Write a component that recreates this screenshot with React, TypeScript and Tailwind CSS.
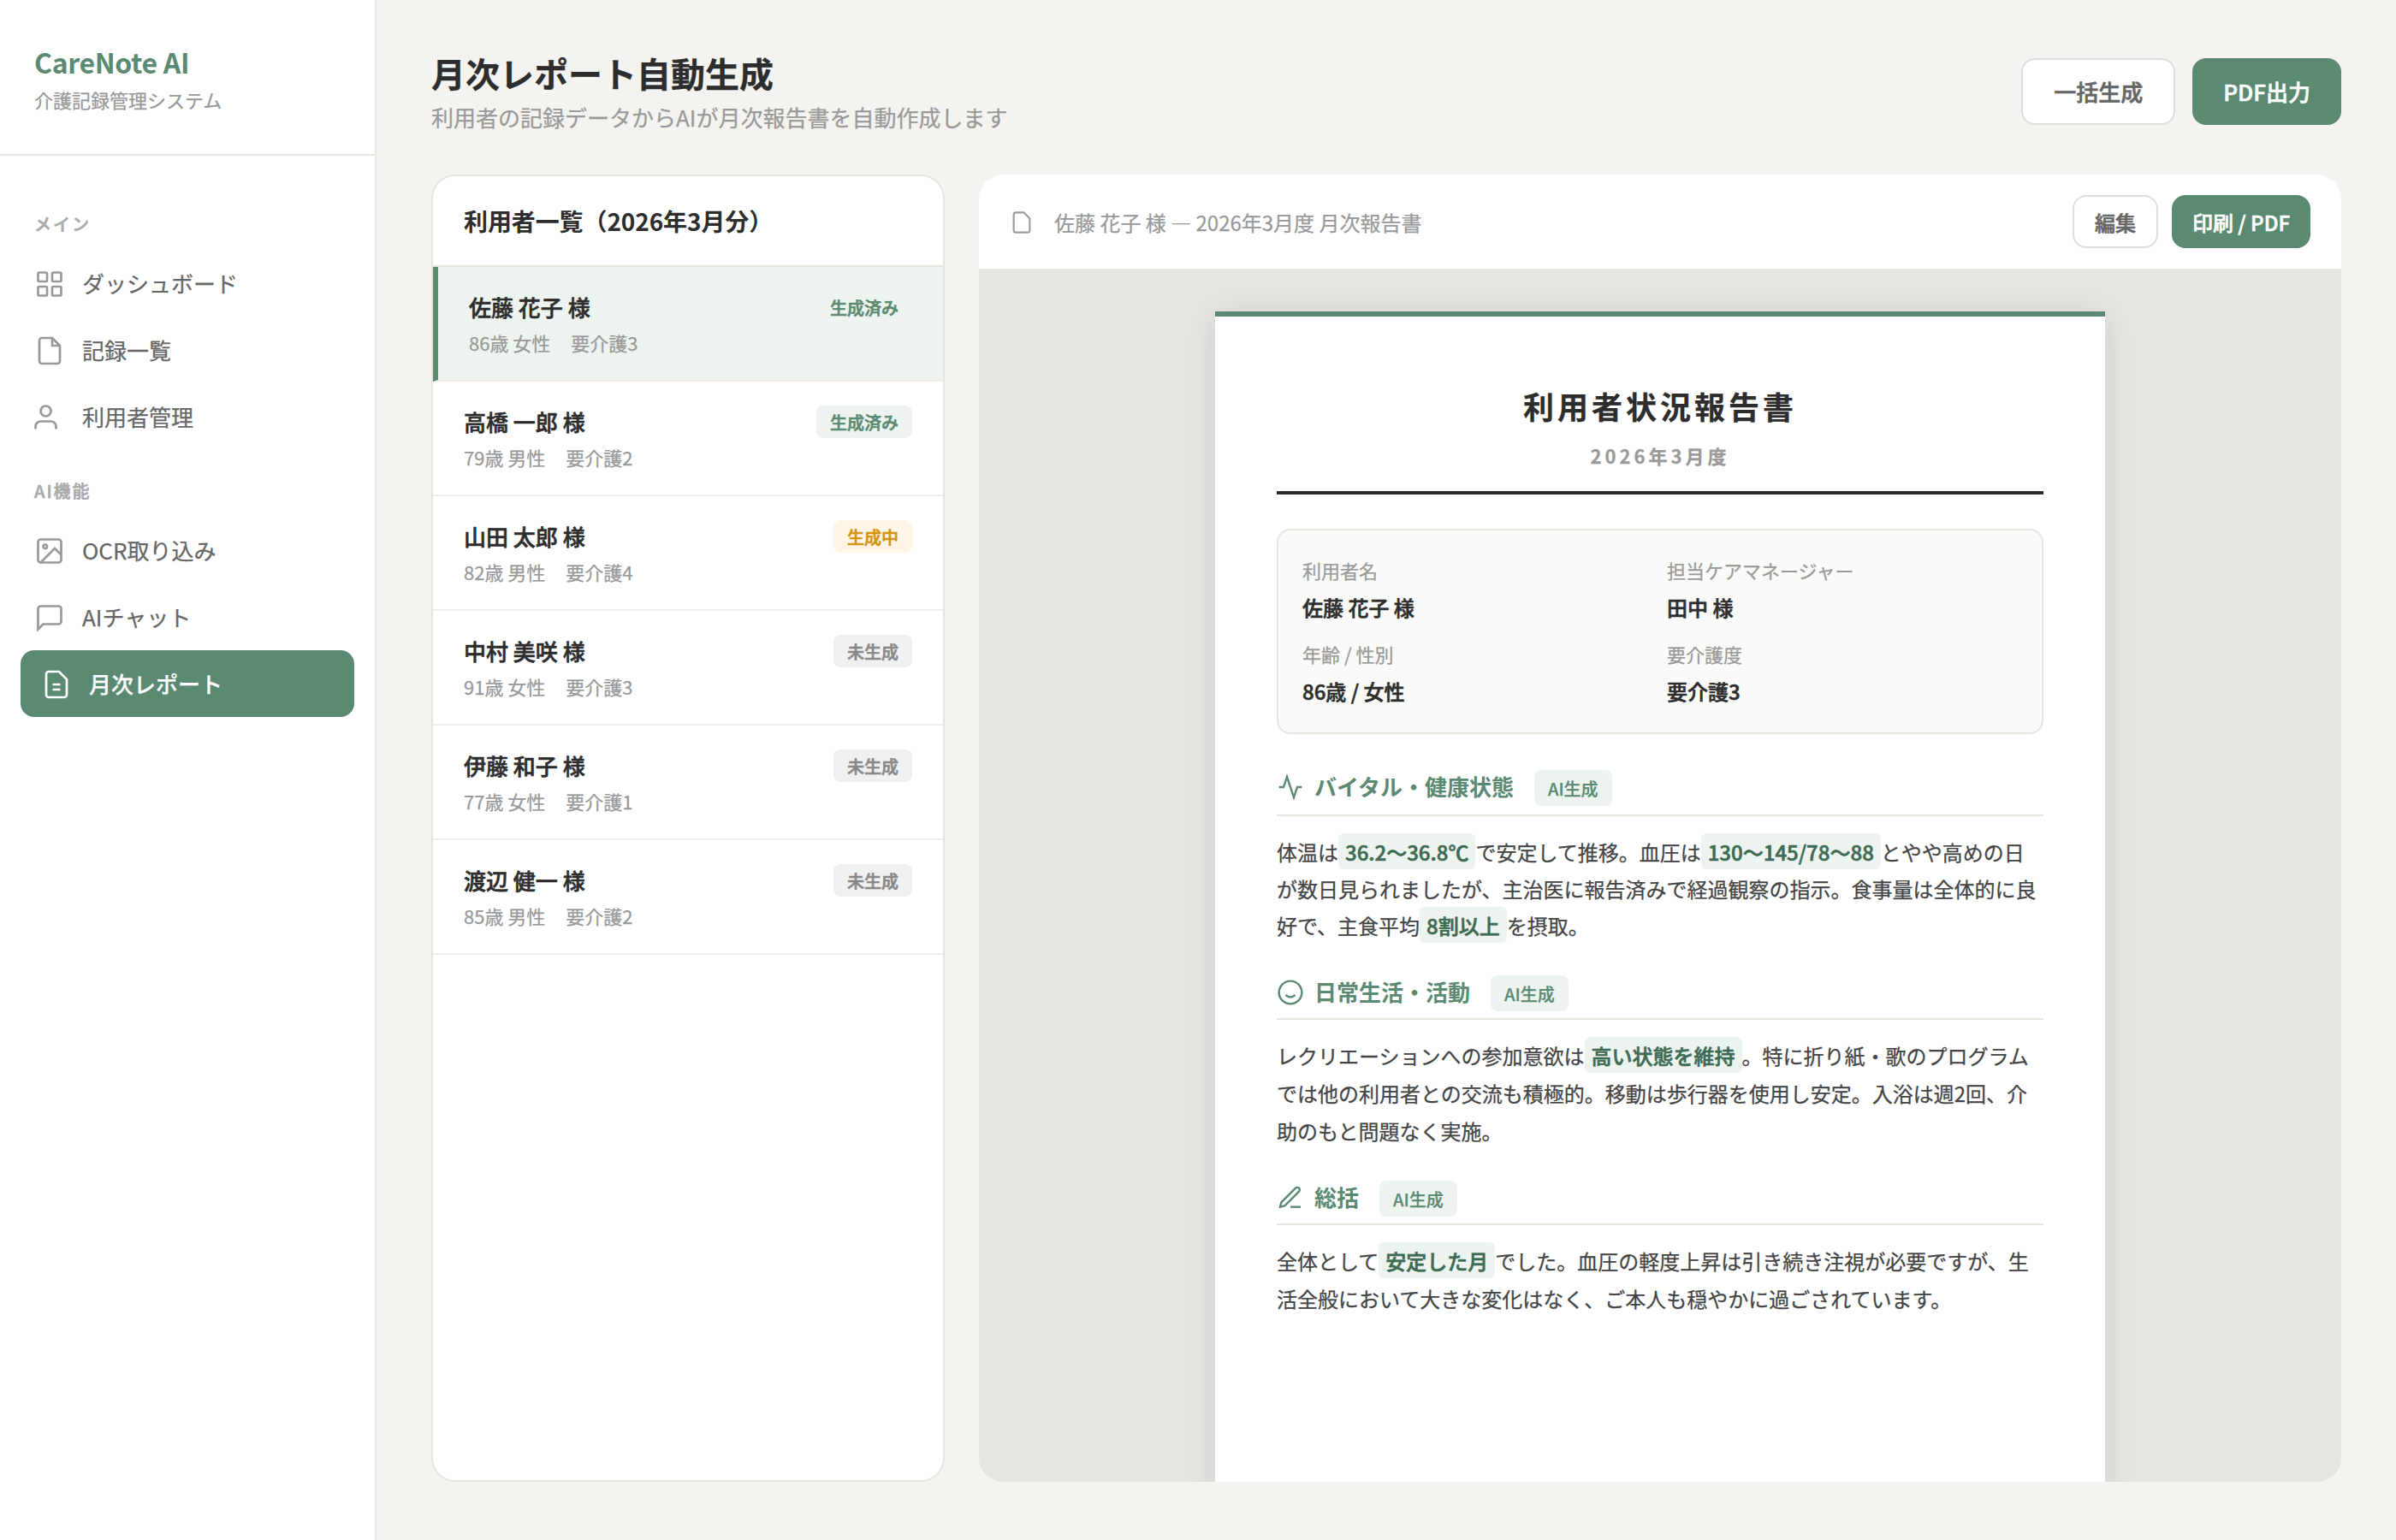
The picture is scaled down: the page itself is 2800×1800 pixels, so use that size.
import type { ReactNode } from "react";

type Status = "done" | "progress" | "none";

interface Resident {
  name: string;
  profile: string;
  care: string;
  status: Status;
}

const residents: Resident[] = [
  { name: "佐藤 花子 様", profile: "86歳 女性", care: "要介護3", status: "done" },
  { name: "高橋 一郎 様", profile: "79歳 男性", care: "要介護2", status: "done" },
  { name: "山田 太郎 様", profile: "82歳 男性", care: "要介護4", status: "progress" },
  { name: "中村 美咲 様", profile: "91歳 女性", care: "要介護3", status: "none" },
  { name: "伊藤 和子 様", profile: "77歳 女性", care: "要介護1", status: "none" },
  { name: "渡辺 健一 様", profile: "85歳 男性", care: "要介護2", status: "none" },
];

const statusLabel: Record<Status, string> = {
  done: "生成済み",
  progress: "生成中",
  none: "未生成",
};

const statusClass: Record<Status, string> = {
  done: "bg-[#edf4f0] text-[#5b8a72]",
  progress: "bg-[#fef5e7] text-[#d4940a]",
  none: "bg-[#f0f0f0] text-[#888888]",
};

const info = [
  { label: "利用者名", value: "佐藤 花子 様" },
  { label: "担当ケアマネージャー", value: "田中 様" },
  { label: "年齢 / 性別", value: "86歳 / 女性" },
  { label: "要介護度", value: "要介護3" },
];

// The family has no semibold cut, so medium gets a slightly heavier outline.
const semibold = "font-medium [-webkit-text-stroke:0.6px]";

function Icon({ className, children }: { className: string; children: ReactNode }) {
  return (
    <svg
      viewBox="0 0 24 24"
      fill="none"
      stroke="currentColor"
      strokeWidth={1.8}
      className={`shrink-0 ${className}`}
    >
      {children}
    </svg>
  );
}

const fileOutline = "M14 2H6a2 2 0 0 0-2 2v16a2 2 0 0 0 2 2h12a2 2 0 0 0 2-2V8z";

function NavLabel({ children }: { children: ReactNode }) {
  return (
    <p className={`px-10 pt-8 pb-[15px] text-[20px] leading-[31px] tracking-[2px] text-[#aaaaaa] ${semibold}`}>
      {children}
    </p>
  );
}

function NavItem({ label, active, children }: { label: string; active?: boolean; children: ReactNode }) {
  if (active) {
    return (
      <a className="mx-6 flex h-[78px] items-center gap-5 rounded-[16px] bg-[#5b8a72] px-6 text-[26px] leading-[38px] font-medium text-white">
        <Icon className="mt-0.5 size-9">{children}</Icon>
        {label}
      </a>
    );
  }
  return (
    <a className="flex h-[78px] items-center gap-5 px-10 text-[26px] leading-[38px] text-[#666666]">
      <Icon className="mt-0.5 size-9 text-[#999999]">{children}</Icon>
      {label}
    </a>
  );
}

function Sidebar() {
  return (
    <aside className="flex w-[440px] shrink-0 flex-col border-r-2 border-[#e8e6e1] bg-white">
      <div className="border-b-2 border-[#e8e4de] px-10 py-12">
        <p className="text-[32px] leading-[48px] font-bold tracking-[-0.35px] text-[#5b8a72] [-webkit-text-stroke:0]">
          CareNote AI
        </p>
        <p className="mt-1 text-[22px] leading-[32px] text-[#999999]">介護記録管理システム</p>
      </div>
      <nav className="flex flex-col pt-8">
        <NavLabel>メイン</NavLabel>
        <NavItem label="ダッシュボード">
          <rect x="3" y="3" width="7" height="7" rx="1" />
          <rect x="14" y="3" width="7" height="7" rx="1" />
          <rect x="3" y="14" width="7" height="7" rx="1" />
          <rect x="14" y="14" width="7" height="7" rx="1" />
        </NavItem>
        <NavItem label="記録一覧">
          <path d={fileOutline} />
          <polyline points="14 2 14 8 20 8" />
        </NavItem>
        <NavItem label="利用者管理">
          <path d="M17 21v-2a4 4 0 0 0-4-4H5a4 4 0 0 0-4 4v2" />
          <circle cx="9" cy="7" r="4" />
        </NavItem>
        <NavLabel>AI機能</NavLabel>
        <NavItem label="OCR取り込み">
          <rect x="3" y="3" width="18" height="18" rx="2" />
          <circle cx="8.5" cy="8.5" r="1.5" />
          <polyline points="21 15 16 10 5 21" />
        </NavItem>
        <NavItem label="AIチャット">
          <path d="M21 15a2 2 0 0 1-2 2H7l-4 4V5a2 2 0 0 1 2-2h14a2 2 0 0 1 2 2z" />
        </NavItem>
        <NavItem label="月次レポート" active>
          <path d={fileOutline} />
          <path d="M9 12h6M9 16h6" />
        </NavItem>
      </nav>
    </aside>
  );
}

function ResidentList() {
  return (
    <section className="w-[600px] shrink-0 overflow-hidden rounded-[28px] border-2 border-[#e8e4de] bg-white">
      <h2 className="border-b-2 border-[#e8e4de] px-9 py-8 text-[28px] leading-[40px] font-bold tracking-[-0.1px] [-webkit-text-stroke:0]">
        利用者一覧（2026年3月分）
      </h2>
      <ul>
        {residents.map((r, i) => (
          <li
            key={r.name}
            className={`flex h-[134px] items-start justify-between border-b-2 border-b-[#f0ede8] px-9 pt-7 ${
              i === 0 ? "border-l-6 border-l-[#5b8a72] bg-[#edf4f0]" : ""
            }`}
          >
            <div>
              <p className={`text-[26px] leading-[38px] ${semibold}`}>{r.name}</p>
              <p className="mt-1.5 flex gap-[24px] text-[22px] leading-[32px] text-[#999999]">
                <span>{r.profile}</span>
                <span>{r.care}</span>
              </p>
            </div>
            <span
              className={`rounded-[8px] px-4 pt-1 pb-[3px] text-[20px] leading-[31px] ${semibold} ${statusClass[r.status]}`}
            >
              {statusLabel[r.status]}
            </span>
          </li>
        ))}
      </ul>
    </section>
  );
}

function Mark({ children }: { children: ReactNode }) {
  return (
    <span className={`rounded-[6px] bg-[#edf4f0] px-2 pt-1 pb-[3px] text-[#3d6b54] ${semibold}`}>{children}</span>
  );
}

interface ReportSectionProps {
  title: string;
  icon: ReactNode;
  headingClass: string;
  bodyClass: string;
  children: ReactNode;
}

function ReportSection({ title, icon, headingClass, bodyClass, children }: ReportSectionProps) {
  return (
    <section className="h-[240px]">
      <div className={`flex items-start border-b-2 border-[#e8e4de] text-[#5b8a72] ${headingClass}`}>
        <Icon className="mt-1.5 size-8">{icon}</Icon>
        <h3 className="ml-3 text-[26px] leading-[42px] font-bold [-webkit-text-stroke:0]">{title}</h3>
        <span className="mt-0.5 ml-6 rounded-[8px] bg-[#edf4f0] px-4 pt-[5px] pb-[3px] text-[20px] leading-[34px] font-medium">
          AI生成
        </span>
      </div>
      <p className={`text-[24px] text-[#444444] ${bodyClass}`}>{children}</p>
    </section>
  );
}

function Paper() {
  return (
    <article className="h-[1470px] w-[1040px] shrink-0 border-t-6 border-[#5b8a72] bg-white px-[72px] pt-[78px] shadow-[0_4px_40px_rgba(0,0,0,0.1)]">
      <header className="border-b-4 border-[#2d2d2d] pb-6 text-center">
        <h2 className="text-[36px] leading-[52px] font-bold tracking-[4px]">利用者状況報告書</h2>
        <p className="mt-3.5 text-[22px] leading-[36px] font-bold tracking-[4px] text-[#999999]">2026年3月度</p>
      </header>

      <dl className="mt-10 grid h-[240px] grid-cols-2 gap-4 rounded-[16px] border-2 border-[#e8e4de] bg-[#fafaf8] p-7">
        {info.map((item) => (
          <div key={item.label}>
            <dt className="text-[22px] leading-[36px] text-[#999999]">{item.label}</dt>
            <dd className={`mt-1.5 text-[24px] leading-[40px] ${semibold}`}>{item.value}</dd>
          </div>
        ))}
      </dl>

      <div className="mt-10">
        <ReportSection
          title="バイタル・健康状態"
          icon={<polyline points="22 12 18 12 15 21 9 3 6 12 2 12" />}
          headingClass="h-[56px]"
          bodyClass="mt-5 leading-[43px]"
        >
          体温は<Mark>36.2〜36.8℃</Mark>で安定して推移。血圧は<Mark>130〜145/78〜88</Mark>
          とやや高めの日が数日見られましたが、主治医に報告済みで経過観察の指示。食事量は全体的に良好で、主食平均
          <Mark>8割以上</Mark>を摂取。
        </ReportSection>
        <ReportSection
          title="日常生活・活動"
          icon={
            <>
              <circle cx="12" cy="12" r="10" />
              <path d="M8 14s1.5 2 4 2 4-2 4-2" />
            </>
          }
          headingClass="h-[54px]"
          bodyClass="mt-5 leading-[44px]"
        >
          レクリエーションへの参加意欲は<Mark>高い状態を維持</Mark>
          。特に折り紙・歌のプログラムでは他の利用者との交流も積極的。移動は歩行器を使用し安定。入浴は週2回、介助のもと問題なく実施。
        </ReportSection>
        <ReportSection
          title="総括"
          icon={
            <>
              <path d="M12 20h9" />
              <path d="M16.5 3.5a2.121 2.121 0 0 1 3 3L7 19l-4 1 1-4L16.5 3.5z" />
            </>
          }
          headingClass="h-[54px]"
          bodyClass="mt-5 leading-[44px]"
        >
          全体として<Mark>安定した月</Mark>
          でした。血圧の軽度上昇は引き続き注視が必要ですが、生活全般において大きな変化はなく、ご本人も穏やかに過ごされています。
        </ReportSection>
      </div>
    </article>
  );
}

function Preview() {
  return (
    <section className="flex flex-1 flex-col overflow-hidden rounded-[28px] bg-[#e6e5e1]">
      <div className="flex h-28 shrink-0 items-center justify-between border-b-2 border-[#e6e5e1] bg-white px-9">
        <div className="mt-0.5 flex items-center gap-6 text-[24px] leading-[36px] text-[#999999]">
          <Icon className="size-7">
            <path d={fileOutline} />
          </Icon>
          <span>佐藤 花子 様 — 2026年3月度 月次報告書</span>
        </div>
        <div className={`flex gap-4 text-[24px] leading-[35px] ${semibold}`}>
          <button className="rounded-[16px] border-2 border-[#dddddd] bg-white px-6 pt-3 pb-[11px] text-[#666666]">
            編集
          </button>
          <button className="rounded-[16px] bg-[#5b8a72] px-6 text-white">印刷 / PDF</button>
        </div>
      </div>
      <div className="flex flex-1 items-start justify-center overflow-hidden pt-12">
        <Paper />
      </div>
    </section>
  );
}

export default function App() {
  return (
    <div
      lang="ja"
      className="flex h-[1800px] w-[2800px] overflow-hidden bg-[#f4f3ef] font-['Noto_Sans_CJK_JP',sans-serif] text-[#2d2d2d] [-webkit-text-stroke:0.25px]"
    >
      <Sidebar />
      <main className="flex flex-1 flex-col px-16 pt-14 pb-[68px]">
        <header className="flex h-[100px] items-start justify-between">
          <div>
            <h1 className="text-[40px] leading-[58px] font-bold">月次レポート自動生成</h1>
            <p className="mt-1 text-[26px] leading-[38px] text-[#999999]">
              利用者の記録データからAIが月次報告書を自動作成します
            </p>
          </div>
          <div className={`mt-3 flex gap-5 text-[26px] leading-[38px] ${semibold}`}>
            <button className="rounded-[16px] border-2 border-[#dddddd] bg-white px-9 py-[18px] text-[#666666]">
              一括生成
            </button>
            <button className="rounded-[16px] bg-[#5b8a72] px-9 text-white">PDF出力</button>
          </div>
        </header>
        <div className="mt-12 flex min-h-0 flex-1 gap-10">
          <ResidentList />
          <Preview />
        </div>
      </main>
    </div>
  );
}
